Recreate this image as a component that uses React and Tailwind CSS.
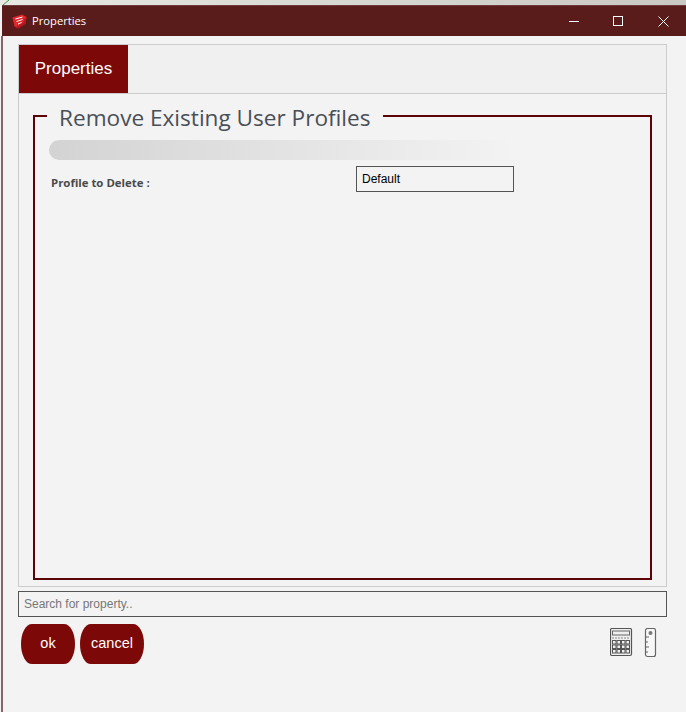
import React from 'react'

const SketchLogo = () => (
  <svg width="15" height="15" viewBox="0 0 15 15">
    <path d="M0.5 3.5 L10 0.5 L14.5 3 L13.5 9.5 L6 14.5 L2.5 12.5 Z" fill="#e3262c" />
    <path d="M2.5 12.5 L6 14.5 L13.5 9.5 L14.5 3 L12.5 5 L11.5 8.5 L5 12.5 Z" fill="#b5161d" />
    <path d="M3.5 5 L10.5 3 M4.5 7.5 L10.5 5.5 M6 10 L9.5 8.5" stroke="#fff" strokeWidth="1" fill="none" />
  </svg>
)

const Calculator = () => (
  <svg width="23" height="29" viewBox="0 0 23 29" fill="none">
    <rect x="0.5" y="0.5" width="21" height="27" rx="1.5" stroke="#555" strokeWidth="1.2" fill="#efefef" />
    <rect x="2.5" y="3" width="17" height="4" stroke="#666" />
    <path d="M2 10 H20" stroke="#aaa" strokeWidth="1.5" strokeDasharray="2 1" />
    {[12.5, 17, 21.5].map(y =>
      [2.5, 7, 11.5, 16].map(x => (
        <rect key={`${x}-${y}`} x={x} y={y} width="3.5" height="3.5" stroke="#555" strokeWidth="1" />
      ))
    )}
  </svg>
)

const Ruler = () => (
  <svg width="13" height="30" viewBox="0 0 13 30" fill="none">
    <rect x="1.5" y="0.5" width="10" height="28" rx="2" stroke="#666" strokeWidth="1.2" fill="#f7f7f7" />
    <circle cx="6.5" cy="5" r="2" fill="#777" />
    <path d="M1.5 9 H5 M1.5 14 H4 M1.5 19 H5 M1.5 24 H4" stroke="#666" />
  </svg>
)

const App = () => {
  return (
    <div className="w-[686px] h-[712px] overflow-hidden bg-[#f3f3f3] font-['Liberation_Sans',sans-serif]">
      <div className="h-[5px] bg-gradient-to-r from-[#e8e8e4] to-[#c9c8c2]">
        <svg width="12" height="5" viewBox="0 0 12 5"><path d="M3 5 L9 0" stroke="#3f9a3f" /></svg>
      </div>
      <div className="ml-[2px] h-[31px] flex items-center bg-[#5a1b1b] border-t border-[#6e3a3a] text-white">
        <div className="ml-[10px] flex"><SketchLogo /></div>
        <span className="ml-[5px] text-[11.2px] font-['Open_Sans',sans-serif]">Properties</span>
        <div className="ml-auto flex items-center">
          <svg width="10" height="10" viewBox="0 0 10 10" className="mr-[34px]"><path d="M0 5.5 H10" stroke="#fff" /></svg>
          <svg width="10" height="10" viewBox="0 0 10 10" className="mr-[35px]"><rect x="0.5" y="0.5" width="9" height="9" stroke="#fff" fill="none" /></svg>
          <svg width="11" height="11" viewBox="0 0 11 11" className="mr-[17px]"><path d="M0.5 0.5 L10.5 10.5 M10.5 0.5 L0.5 10.5" stroke="#fff" /></svg>
        </div>
      </div>

      <div className="h-[676px] pl-[1px]">
        <div className="h-full border-l-2 border-[#8a6464] pl-[15px] pr-[19px] pt-2">
          <div className="h-[543px] border border-[#cccccc] flex flex-col">
            <div className="h-[49px] shrink-0 bg-[#f0f0f0] border-b border-[#cccccc]">
              <div className="w-[109px] h-full bg-[#7d0808] text-white text-[17px] flex items-center justify-center">Properties</div>
            </div>
            <div className="flex-1 px-[14px] pt-[10px]">
              <fieldset className="h-[476px] border-2 border-[#5c0308] px-[14px]">
                <legend className="-ml-[2px] h-6 px-3 text-[22.6px] leading-[28px] text-[#4a4f57] font-['Open_Sans',sans-serif]">Remove Existing User Profiles</legend>
                <div className="mt-3 h-5 w-[466px] rounded-full bg-gradient-to-r from-[#d3d3d3] to-[#f3f3f3]" />
                <div className="mt-[6px] flex items-start">
                  <label className="ml-[2px] mt-[9px] w-[305px] text-[11.4px] font-bold leading-[15px] text-[#4a4a4a] font-['Open_Sans',sans-serif]">Profile to Delete :</label>
                  <input
                    readOnly
                    value="Default"
                    className="w-[158px] h-[26px] border border-[#555] px-[5px] text-xs text-black bg-transparent outline-none"
                  />
                </div>
              </fieldset>
            </div>
          </div>
          <input
            placeholder="Search for property.."
            className="mt-1 block w-[649px] h-[26px] border border-[#555] px-[5px] text-xs bg-transparent outline-none placeholder:text-[#777]"
          />
          <div className="mt-[7px] flex items-start">
            <button className="ml-[3px] w-[54px] h-10 rounded-[11px/20px] bg-[#7d0808] text-white text-[14.5px]">ok</button>
            <button className="ml-[5px] w-16 h-10 rounded-[11px/20px] bg-[#7d0808] text-white text-[14.5px]">cancel</button>
            <div className="ml-auto mt-1 mr-[10px] flex gap-[11px]">
              <Calculator />
              <Ruler />
            </div>
          </div>
        </div>
      </div>
    </div>
  )
}

export default App
